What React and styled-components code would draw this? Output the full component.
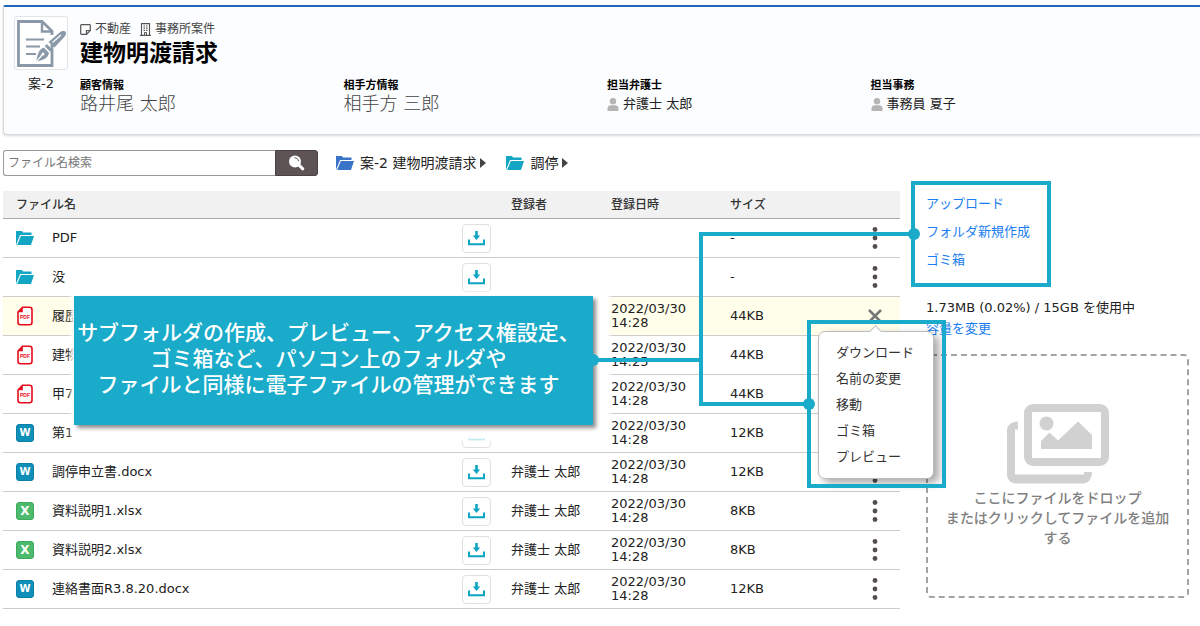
import React from 'react'
import styled, { createGlobalStyle, css } from 'styled-components'

const teal = '#19abc9'

const files = [
  { type: 'folder', name: 'PDF', size: '-' },
  { type: 'folder', name: '没', size: '-' },
  { type: 'pdf', name: '履歴', date: '2022/03/30', time: '14:28', size: '44KB', open: true },
  { type: 'pdf', name: '建物', date: '2022/03/30', time: '14:25', size: '44KB' },
  { type: 'pdf', name: '甲7', date: '2022/03/30', time: '14:28', size: '44KB' },
  { type: 'word', name: '第1', date: '2022/03/30', time: '14:28', size: '12KB' },
  { type: 'word', name: '調停申立書.docx', owner: '弁護士 太郎', date: '2022/03/30', time: '14:28', size: '12KB' },
  { type: 'excel', name: '資料説明1.xlsx', owner: '弁護士 太郎', date: '2022/03/30', time: '14:28', size: '8KB' },
  { type: 'excel', name: '資料説明2.xlsx', owner: '弁護士 太郎', date: '2022/03/30', time: '14:28', size: '8KB' },
  { type: 'word', name: '連絡書面R3.8.20.docx', owner: '弁護士 太郎', date: '2022/03/30', time: '14:28', size: '12KB' },
]

const menuItems = ['ダウンロード', '名前の変更', '移動', 'ゴミ箱', 'プレビュー']

const FolderIcon = ({ color = '#12a5c4' }) => (
  <svg width="18" height="14" viewBox="0 0 18 14" aria-hidden="true">
    <path d="M0 14V0h6l1 1.500H15.500V4H4L0 14z" fill={color} />
    <path d="M4.800 5H18l-3 9H1.200z" fill={color} />
  </svg>
)

const PdfIcon = () => (
  <svg width="18" height="20" viewBox="0 0 18 20" aria-hidden="true">
    <path d="M6.500 1.200H13.500a2.500 2.500 0 0 1 2.500 2.500V16.300a2.500 2.500 0 0 1-2.500 2.500H4.500a2.500 2.500 0 0 1-2.500-2.500V6z" fill="#fff" stroke="#e60c1c" strokeWidth="1.600" />
    <path d="M6.800 1v5.200H1.600z" fill="#e60c1c" />
    <text x="9" y="13" textAnchor="middle" fontFamily="Liberation Sans, sans-serif" fontWeight="700" fontSize="5" fill="#e60c1c">PDF</text>
  </svg>
)

const DownloadIcon = () => (
  <svg width="17" height="15" viewBox="0 0 17 15" aria-hidden="true">
    <path d="M7.200 0h2.600v4.500h2.400L8.500 9 4.800 4.500h2.400z" fill="#0ba5c4" />
    <path d="M1 8.500V13.300H16V8.500" fill="none" stroke="#0ba5c4" strokeWidth="2" />
  </svg>
)

const DotsIcon = () => (
  <svg width="6" height="22" viewBox="0 0 6 22" aria-hidden="true">
    <g fill="#544d4f">
      <circle cx="3" cy="2.500" r="2.400" />
      <circle cx="3" cy="11" r="2.400" />
      <circle cx="3" cy="19.500" r="2.400" />
    </g>
  </svg>
)

const CloseIcon = () => (
  <svg width="14" height="14" viewBox="0 0 14 14" aria-hidden="true">
    <path d="M1 1l12 12M13 1L1 13" stroke="#777" strokeWidth="2.600" />
  </svg>
)

const CaseIcon = () => (
  <svg width="52" height="52" viewBox="0 0 52 52" fill="none" aria-hidden="true">
    <path d="M37 27V48.500H3.500V4.500H27L37 14V18" stroke="#8b98a7" strokeWidth="2.800" />
    <path d="M27 4V14.500H37" stroke="#8b98a7" strokeWidth="2.400" />
    <path d="M11 22.500H29M11 29.500H25M11 37H21" stroke="#8b98a7" strokeWidth="2.200" />
    <path d="M33.500 25L45 15.200C47 13.500 49.800 13.600 50.600 14.800C51.400 16 51 18 49.500 19.800L39.500 30.500z" fill="#8b98a7" />
    <path d="M37.500 25.500L46 18" stroke="#fff" strokeWidth="1.200" />
    <path d="M31.800 27l5.600 5.500-2.200 2.200-5.400-5.500z" fill="#8b98a7" />
    <path d="M28.800 30.500L34 36C33 40.500 30 42.500 21.300 44.600C22.500 36 24.500 32 28.800 30.500z" fill="#8b98a7" />
    <path d="M21.500 44.300L27.500 37.500" stroke="#fff" strokeWidth="1.200" />
    <circle cx="28" cy="37" r="1.500" fill="#fff" />
  </svg>
)

const NoteIcon = () => (
  <svg width="11" height="11" viewBox="0 0 11 11" fill="none" stroke="#555" strokeWidth="1.200" aria-hidden="true">
    <path d="M.7 1.500a.8.8 0 0 1 .8-.8H9.500a.8.8 0 0 1 .8.8V6.500L6.500 10.300H1.500a.8.8 0 0 1-.8-.8z" />
    <path d="M6.500 10.300V6.500H10.300" />
  </svg>
)

const BuildingIcon = () => (
  <svg width="11" height="13" viewBox="0 0 11 13" fill="none" stroke="#555" aria-hidden="true">
    <path d="M1.500 12.500V.6H9.500V12.500M0 12.400H11" strokeWidth="1.100" />
    <path d="M3.500 3H5M6 3H7.500M3.500 5.200H5M6 5.200H7.500M3.500 7.400H5M6 7.400H7.500" strokeWidth="1.200" />
    <path d="M4.500 12V9.500H6.500V12" />
  </svg>
)

const PersonIcon = () => (
  <svg width="12" height="13" viewBox="0 0 12 13" fill="#b5b5b5" aria-hidden="true">
    <circle cx="6" cy="3.200" r="3.200" />
    <path d="M.5 13V10.500a3.500 3.500 0 0 1 3.500-3.300h4a3.500 3.500 0 0 1 3.500 3.300V13z" />
  </svg>
)

const SearchIcon = () => (
  <svg width="17" height="16" viewBox="0 0 17 16" aria-hidden="true">
    <circle cx="7" cy="6.500" r="6" fill="#fff" />
    <path d="M6.500 2.800c2.200 0 3.800 1.400 4 3.500" fill="none" stroke="#5e5355" strokeWidth="1" />
    <path d="M11 10.200L14.800 13.800" stroke="#fff" strokeWidth="3" strokeLinecap="round" />
  </svg>
)

const ImagesIcon = () => (
  <svg width="102" height="80" viewBox="0 0 102 80" aria-hidden="true">
    <path d="M11 17.500v8H8V70.500H77V68h8c0 7-4 11.500-9 11.500H9c-5 0-9-4-9-9V26.500c0-5 4-9 11-9z" fill="#d1d1d1" />
    <rect x="21" y="4" width="77" height="54" rx="5" fill="none" stroke="#d1d1d1" strokeWidth="8" />
    <circle cx="39.500" cy="19.500" r="7" fill="#d1d1d1" />
    <path d="M34 45V37l8.500-8.500 8.500 8L71 17.500 85 31V45z" fill="#d1d1d1" />
  </svg>
)

const FileIcon = ({ type }) => {
  if (type === 'folder') return <FolderIcon />
  if (type === 'pdf') return <PdfIcon />
  return <Badge $type={type}>{type === 'word' ? 'W' : 'X'}</Badge>
}

const FileRow = ({ file }) => (
  <Row $active={file.open}>
    <IconCell><FileIcon type={file.type} /></IconCell>
    <Cell>{file.name}</Cell>
    <Cell>
      <DownloadButton type="button" aria-label={`${file.name} ダウンロード`}><DownloadIcon /></DownloadButton>
    </Cell>
    <Cell>{file.owner}</Cell>
    <Cell>{file.date}{file.date && <br />}{file.time}</Cell>
    <Cell>{file.size}</Cell>
    <ActionCell>
      <MenuButton type="button" aria-label={`${file.name} メニュー`} aria-expanded={!!file.open}>
        {file.open ? <CloseIcon /> : <DotsIcon />}
      </MenuButton>
      {file.open && (
        <Menu>
          {menuItems.map((item) => (
            <li key={item}><MenuItem type="button">{item}</MenuItem></li>
          ))}
        </Menu>
      )}
    </ActionCell>
  </Row>
)

export default function App() {
  return (
    <Page>
      <GlobalStyle />
      <Header>
        <CaseBox>
          <CaseFrame><CaseIcon /></CaseFrame>
          <span>案-2</span>
        </CaseBox>
        <CaseInfo>
          <Tags>
            <Tag><NoteIcon />不動産</Tag>
            <Tag><BuildingIcon />事務所案件</Tag>
          </Tags>
          <Title>建物明渡請求</Title>
          <People>
            <div>
              <Term>顧客情報</Term>
              <Client>路井尾 太郎</Client>
            </div>
            <div>
              <Term>相手方情報</Term>
              <Client>相手方 三郎</Client>
            </div>
            <div>
              <Term>担当弁護士</Term>
              <Staff><PersonIcon />弁護士 太郎</Staff>
            </div>
            <div>
              <Term>担当事務</Term>
              <Staff><PersonIcon />事務員 夏子</Staff>
            </div>
          </People>
        </CaseInfo>
      </Header>

      <Toolbar>
        <SearchForm role="search" onSubmit={(e) => e.preventDefault()}>
          <SearchInput type="text" aria-label="ファイル名検索" placeholder="ファイル名検索" />
          <SearchButton type="submit" aria-label="検索"><SearchIcon /></SearchButton>
        </SearchForm>
        <Breadcrumb>
          <Crumb href="#"><FolderIcon color="#3a74c8" /><span>案-2 建物明渡請求</span></Crumb>
          <Crumb href="#"><FolderIcon /><span>調停</span></Crumb>
        </Breadcrumb>
      </Toolbar>

      <Main>
        <Table>
          <colgroup>
            <Col $width={49} />
            <col />
            <Col $width={49} />
            <Col $width={100} />
            <Col $width={119} />
            <Col $width={120} />
            <Col $width={50} />
          </colgroup>
          <thead>
            <tr>
              <HeadCell colSpan={3} $first>ファイル名</HeadCell>
              <HeadCell>登録者</HeadCell>
              <HeadCell>登録日時</HeadCell>
              <HeadCell>サイズ</HeadCell>
              <HeadCell />
            </tr>
          </thead>
          <tbody>
            {files.map((file) => <FileRow key={file.name} file={file} />)}
          </tbody>
        </Table>

        <Side>
          <SideLinks>
            <SideLink href="#">アップロード</SideLink>
            <SideLink href="#">フォルダ新規作成</SideLink>
            <SideLink href="#">ゴミ箱</SideLink>
          </SideLinks>
          <Usage>
            <span>1.73MB (0.02%) / 15GB を使用中</span>
            <SideLink href="#">容量を変更</SideLink>
          </Usage>
          <DropZone>
            <HiddenFile type="file" multiple />
            <ImagesIcon />
            <DropText>
              ここにファイルをドロップ<br />
              またはクリックしてファイルを追加<br />
              する
            </DropText>
          </DropZone>
        </Side>
      </Main>

      <Callout>
        サブフォルダの作成、プレビュー、アクセス権設定、<br />
        ゴミ箱など、パソコン上のフォルダや<br />
        ファイルと同様に電子ファイルの管理ができます
      </Callout>
      <Line $x={593} $y={358} $w={108} $h={4} />
      <Line $x={699} $y={232} $w={4} $h={174} />
      <Line $x={699} $y={232} $w={215} $h={4} />
      <Line $x={699} $y={402} $w={110} $h={4} />
      <Outline $x={911} $y={181} $w={140} $h={106} />
      <Outline $x={807} $y={320} $w={139} $h={168} />
      <Dot $x={593} $y={360} />
      <Dot $x={914} $y={234} />
      <Dot $x={809} $y={404} />
    </Page>
  )
}

const GlobalStyle = createGlobalStyle`
  * {
    box-sizing: border-box;
  }
  body {
    margin: 0;
    background: #fff;
    color: #222;
    font-family: "DejaVu Sans", "Noto Sans CJK JP", sans-serif;
    font-size: 13px;
    line-height: 20px;
  }
  button, input {
    font-family: inherit;
  }
  svg {
    display: block;
    flex-shrink: 0;
  }
`

const Page = styled.div`
  position: relative;
  padding: 5px 0 16px 3px;
  overflow: hidden;
`

const Header = styled.header`
  display: flex;
  gap: 12px;
  padding: 9px 66px 20px 10px;
  background: #fcfdff;
  border: 1px solid #d8d8d8;
  border-top: 2px solid #1f66bd;
  border-right: none;
  border-radius: 2px 0 0 4px;
  box-shadow: 0 1px 3px rgba(0, 0, 0, 0.15);
`

const CaseBox = styled.div`
  display: flex;
  flex-direction: column;
  align-items: center;
  gap: 4px;
`

const CaseFrame = styled.div`
  background: #fff;
  border: 1px solid #e3e4e6;
  border-radius: 3px;
`

const CaseInfo = styled.div`
  flex: 1;
  min-width: 0;
`

const Tags = styled.div`
  display: flex;
  gap: 9px;
  padding-top: 5px;
  color: #444;
  font-size: 12px;
  line-height: 16px;
`

const Tag = styled.span`
  display: flex;
  align-items: center;
  gap: 4px;
`

const Title = styled.h1`
  margin: 0 0 9px;
  color: #000;
  font-size: 23px;
  font-weight: 700;
  line-height: 32px;
`

const People = styled.div`
  display: grid;
  grid-template-columns: repeat(4, 1fr);
`

const Term = styled.div`
  color: #000;
  font-size: 11px;
  font-weight: 700;
  line-height: 16px;
`

const Client = styled.div`
  color: #444;
  font-size: 18px;
  font-weight: 300;
  line-height: 20px;
`

const Staff = styled.div`
  display: flex;
  align-items: center;
  gap: 4px;
`

const Toolbar = styled.div`
  display: flex;
  align-items: center;
  gap: 18px;
  padding: 15px 11px 15px 0;
`

const SearchForm = styled.form`
  display: flex;
  width: 315px;
  height: 26px;
`

const SearchInput = styled.input`
  flex: 1;
  min-width: 0;
  padding: 0 4px;
  border: 1px solid #999;
  border-right: none;
  border-radius: 3px 0 0 3px;
  font-size: 12px;

  &::placeholder {
    color: #757575;
  }
`

const SearchButton = styled.button`
  display: flex;
  align-items: center;
  justify-content: center;
  width: 43px;
  padding: 0;
  background: #5e5355;
  border: 1px solid #4a4143;
  border-radius: 0 3px 3px 0;
`

const Breadcrumb = styled.nav`
  display: flex;
  gap: 20px;
`

const Crumb = styled.a`
  display: flex;
  align-items: center;
  gap: 6px;
  color: #222;
  font-size: 14px;
  text-decoration: none;

  &::after {
    content: '';
    margin-left: -2px;
    border: 5px solid transparent;
    border-left: 6px solid #444;
    border-right: none;
  }
`

const Main = styled.main`
  display: flex;
  align-items: flex-start;
  gap: 26px;
  padding-right: 11px;
`

const Table = styled.table`
  flex: 1;
  width: 100%;
  table-layout: fixed;
  border-collapse: separate;
  border-spacing: 0;
`

const Col = styled.col`
  width: ${({ $width }) => $width}px;
`

const HeadCell = styled.th`
  height: 28px;
  padding: ${({ $first }) => ($first ? '0 0 0 13px' : '0')};
  background: #f1f1f1;
  border-bottom: 1px solid #aaa;
  color: #333;
  font-size: 12px;
  font-weight: 500;
  text-align: left;
`

const Row = styled.tr`
  background: ${({ $active }) => ($active ? '#fffeea' : '#fff')};
`

const Cell = styled.td`
  height: 39px;
  padding: 0;
  border-bottom: 1px solid #ccc;
  line-height: 14px;
  white-space: nowrap;
`

const IconCell = styled(Cell)`
  padding-left: 13px;
`

const ActionCell = styled(Cell)`
  position: relative;
`

const Badge = styled.span`
  display: flex;
  align-items: center;
  justify-content: center;
  width: 18px;
  height: 18px;
  border-radius: 3px;
  color: #fff;
  font-weight: 700;
  ${({ $type }) =>
    $type === 'word'
      ? css`
          background: #108fb9;
          border: 1px solid #0a7fa8;
          font-size: 10px;
        `
      : css`
          background: #4dbb6d;
          border: 1px solid #3da95c;
          font-size: 12px;
        `}
`

const DownloadButton = styled.button`
  display: flex;
  align-items: center;
  justify-content: center;
  width: 29px;
  height: 29px;
  padding: 0;
  background: #fff;
  border: 1px solid #e0e0e0;
  border-radius: 4px;
`

const MenuButton = styled.button`
  display: flex;
  align-items: center;
  justify-content: center;
  width: 50px;
  height: 30px;
  padding: 0;
  background: none;
  border: none;
`

const Menu = styled.ul`
  position: absolute;
  z-index: 1;
  top: 34px;
  right: -34px;
  width: 116px;
  margin: 0;
  padding: 8px 0;
  list-style: none;
  background: #fff;
  border: 1px solid #bbb;
  border-radius: 7px;
  box-shadow: 5px 4px 8px rgba(0, 0, 0, 0.35);

  &::before {
    content: '';
    position: absolute;
    top: -5px;
    left: 52px;
    width: 8px;
    height: 8px;
    background: #fff;
    border: 1px solid #bbb;
    border-right: none;
    border-bottom: none;
    transform: rotate(45deg);
  }
`

const MenuItem = styled.button`
  display: block;
  width: 100%;
  height: 26px;
  padding: 0 0 0 17px;
  background: none;
  border: none;
  color: #333;
  font-size: 13px;
  line-height: 26px;
  text-align: left;
`

const Side = styled.aside`
  flex: 0 0 263px;
`

const SideLinks = styled.div`
  display: flex;
  flex-direction: column;
  align-items: flex-start;
  gap: 8px;
  padding: 3px 0 28px 0;
`

const SideLink = styled.a`
  color: #1a7df0;
  text-decoration: none;
`

const Usage = styled.div`
  display: flex;
  flex-direction: column;
  align-items: flex-start;
  gap: 1px;
  padding: 0 0 15px 0;
`

const DropZone = styled.label`
  display: flex;
  flex-direction: column;
  align-items: center;
  justify-content: center;
  gap: 4px;
  min-height: 244px;
  border: 2px dashed #a3a3a3;
  border-radius: 5px;
`

const HiddenFile = styled.input`
  position: absolute;
  width: 1px;
  height: 1px;
  opacity: 0;
`

const DropText = styled.span`
  color: #808080;
  font-size: 14px;
  font-weight: 500;
  text-align: center;
`

const Callout = styled.div`
  position: absolute;
  top: 296px;
  left: 74px;
  display: flex;
  flex-direction: column;
  justify-content: center;
  width: 519px;
  height: 129px;
  padding: 0 10px 4px 0;
  background: ${teal};
  box-shadow: 3px 3px 4px rgba(0, 0, 0, 0.45), 7px 6px 4px 10px #fff;
  color: #fff;
  font-size: 21px;
  font-weight: 500;
  line-height: 26px;
  text-align: center;
  white-space: nowrap;
`

const Line = styled.div`
  position: absolute;
  z-index: 2;
  left: ${({ $x }) => $x}px;
  top: ${({ $y }) => $y}px;
  width: ${({ $w }) => $w}px;
  height: ${({ $h }) => $h}px;
  background: ${teal};
`

const Outline = styled(Line)`
  background: none;
  border: 4px solid ${teal};
`

const Dot = styled.div`
  position: absolute;
  z-index: 2;
  left: ${({ $x }) => $x}px;
  top: ${({ $y }) => $y}px;
  width: 12px;
  height: 12px;
  margin: -6px 0 0 -6px;
  border-radius: 50%;
  background: ${teal};
`
